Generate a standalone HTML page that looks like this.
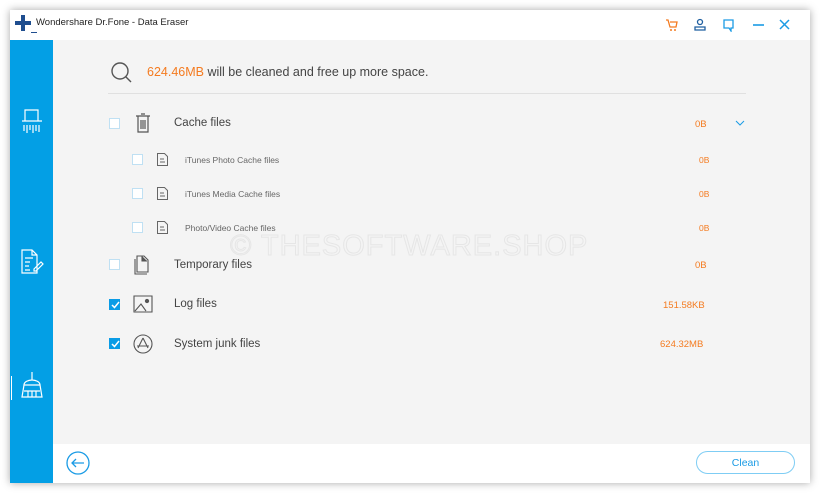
<!DOCTYPE html>
<html><head><meta charset="utf-8"><style>
*{margin:0;padding:0;box-sizing:border-box}
body{width:820px;height:493px;background:#fff;font-family:"Liberation Sans",sans-serif;position:relative;overflow:hidden}
.win{position:absolute;left:10px;top:10px;width:800px;height:473px;background:#f4f4f4;box-shadow:0 0 8px rgba(0,0,0,.35)}
.title{position:absolute;left:0;top:0;width:800px;height:30px;background:#fff}
.side{position:absolute;left:0;top:30px;width:43px;height:443px;background:#039fe5}
.bottom{position:absolute;left:43px;top:434px;width:757px;height:39px;background:#fff}
.t{position:absolute;white-space:nowrap}
.cb{position:absolute;width:11px;height:11px;border:1px solid #bfe0f3;background:#fff}
.cb.on{background:#0a9ce6;border-color:#0a9ce6}
.g{color:#444;font-size:11.5px}
.s{color:#666;font-size:8.5px}
.o{color:#f47b20;font-size:9.5px}
</style></head><body>
<div class="win">
 <div class="title">
  <svg style="position:absolute;left:5px;top:5px" width="16" height="16"><path d="M6 0h4v6h6v4h-6v6h-4v-6h-6v-4h6z" fill="#1f4e8f"/></svg>
  <div style="position:absolute;left:21px;top:22px;width:6px;height:1px;background:#1f4e8f"></div>
  <div class="t" style="left:26px;top:7px;font-size:9.5px;color:#222">Wondershare Dr.Fone - Data Eraser</div>
  <svg style="position:absolute;left:655px;top:8px" width="130" height="14" fill="none" stroke-width="1.3">
   <path d="M1 2h2l2 7h6l1-5H5" stroke="#f47b20"/><circle cx="6" cy="12" r="1" fill="#f47b20" stroke="none"/><circle cx="10" cy="12" r="1" fill="#f47b20" stroke="none"/>
   <circle cx="35" cy="4" r="2.5" stroke="#1f5fa0"/><path d="M30 9h10v3H30z" stroke="#1f5fa0"/>
   <path d="M59 2h9v8h-2v3l-2-3h-5z" stroke="#1a9be5"/>
   <path d="M88 7h11" stroke="#1a9be5" stroke-width="1.6"/>
   <path d="M115 2l9 9M124 2l-9 9" stroke="#1a9be5" stroke-width="1.5"/>
  </svg>
 </div>
 <div class="side">
  <svg style="position:absolute;left:11px;top:69px" width="22" height="26" fill="none" stroke="#fff" stroke-width="1.2"><path d="M4 1h13v11H4zM1 12h20M3 16v6M6 16v8M9 16v5M12 16v8M15 16v6M18 16v7"/></svg>
  <svg style="position:absolute;left:10px;top:209px" width="24" height="26" fill="none" stroke="#fff" stroke-width="1.2"><path d="M2 1h10l5 5v18H2zM12 1v5h5M5 9h8M5 13h5M5 17h4M5 21h5M14 20l7-7 2 2-7 7h-2z"/></svg>
  <div style="position:absolute;left:1px;top:336px;width:1px;height:24px;background:#fff"></div>
  <svg style="position:absolute;left:10px;top:331px" width="24" height="28" fill="none" stroke="#fff" stroke-width="1.2"><path d="M12 1v8M4 14c0-3 4-5 8-5s8 2 8 5zM4 14l-2 12h20l-2-12M4 20h16M8 20v6M12 20v6M16 20v6"/></svg>
 </div>
 <svg style="position:absolute;left:100px;top:51px" width="24" height="24" fill="none" stroke="#555" stroke-width="1.4"><circle cx="10" cy="10" r="8"/><path d="M16 16l5 5"/></svg>
 <div class="t" style="left:137px;top:55px;font-size:12.5px;color:#444"><span style="color:#f47b20">624.46MB</span> will be cleaned and free up more space.</div>
 <div style="position:absolute;left:98px;top:83px;width:638px;height:1px;background:#e0e0e0"></div>

 <div class="cb" style="left:99px;top:108px"></div>
 <svg style="position:absolute;left:125px;top:103px" width="16" height="20" fill="none" stroke="#555" stroke-width="1.2"><path d="M1 3h14M6 1h4M3 3v16h10V3M6 7v9M8 7v9M10 7v9"/></svg>
 <div class="t g" style="left:164px;top:107px">Cache files</div>
 <div class="t o" style="left:685px;top:109px">0B</div>
 <svg style="position:absolute;left:725px;top:110px" width="10" height="6" fill="none" stroke="#1a9be5"><path d="M1 1l4 4 4-4"/></svg>

 <div class="cb" style="left:122px;top:144px"></div>
 <svg style="position:absolute;left:147px;top:143px" width="11" height="13" fill="none" stroke="#666"><path d="M.5.5h7l3 3v9H.5zM3 6h4M3 9h5"/></svg>
 <div class="t s" style="left:175px;top:145px">iTunes Photo Cache files</div>
 <div class="t o" style="left:689px;top:145px;font-size:8.5px">0B</div>

 <div class="cb" style="left:122px;top:178px"></div>
 <svg style="position:absolute;left:147px;top:177px" width="11" height="13" fill="none" stroke="#666"><path d="M.5.5h7l3 3v9H.5zM3 6h4M3 9h5"/></svg>
 <div class="t s" style="left:175px;top:179px">iTunes Media Cache files</div>
 <div class="t o" style="left:689px;top:179px;font-size:8.5px">0B</div>

 <div class="cb" style="left:122px;top:212px"></div>
 <svg style="position:absolute;left:147px;top:211px" width="11" height="13" fill="none" stroke="#666"><path d="M.5.5h7l3 3v9H.5zM3 6h4M3 9h5"/></svg>
 <div class="t s" style="left:175px;top:213px">Photo/Video Cache files</div>
 <div class="t o" style="left:689px;top:213px;font-size:8.5px">0B</div>

 <div class="t" style="left:220px;top:220px;font-size:29px;color:transparent;-webkit-text-stroke:1px #e6e6e6;letter-spacing:1px">© THESOFTWARE.SHOP</div>

 <div class="cb" style="left:99px;top:249px"></div>
 <svg style="position:absolute;left:124px;top:245px" width="18" height="20" fill="none" stroke="#555" stroke-width="1.1"><path d="M3 1h7l4 4v12H3zM1 4v15h12"/><path d="M8 1v5h5" fill="#555"/></svg>
 <div class="t g" style="left:164px;top:249px">Temporary files</div>
 <div class="t o" style="left:685px;top:250px">0B</div>

 <div class="cb on" style="left:99px;top:289px"></div>
 <svg style="position:absolute;left:101px;top:291px" width="9" height="8" fill="none" stroke="#fff" stroke-width="1.5"><path d="M1 4l2.5 2.5L8 1"/></svg>
 <svg style="position:absolute;left:123px;top:285px" width="20" height="18" fill="none" stroke="#555" stroke-width="1.1"><path d="M1 1h18v16H1zM2 16l6-7 5 7"/><circle cx="14" cy="6" r="1.6" fill="#555"/></svg>
 <div class="t g" style="left:164px;top:288px">Log files</div>
 <div class="t o" style="left:653px;top:290px">151.58KB</div>

 <div class="cb on" style="left:99px;top:328px"></div>
 <svg style="position:absolute;left:101px;top:330px" width="9" height="8" fill="none" stroke="#fff" stroke-width="1.5"><path d="M1 4l2.5 2.5L8 1"/></svg>
 <svg style="position:absolute;left:123px;top:324px" width="20" height="20" fill="none" stroke="#555" stroke-width="1.1"><circle cx="10" cy="10" r="9"/><path d="M10 4l-5 10M10 4l5 10M4 12h12"/></svg>
 <div class="t g" style="left:164px;top:328px">System junk files</div>
 <div class="t o" style="left:650px;top:329px">624.32MB</div>

 <div class="bottom">
  <svg style="position:absolute;left:13px;top:7px" width="24" height="24" fill="none" stroke="#1a9be5" stroke-width="1.3"><circle cx="12" cy="12" r="11"/><path d="M18 12H6M10 8l-4 4 4 4"/></svg>
  <div style="position:absolute;left:643px;top:7px;width:99px;height:23px;border:1.5px solid #7fcdf4;border-radius:12px;color:#1a9be5;font-size:10.5px;text-align:center;line-height:21px;padding-top:1px">Clean</div>
 </div>
</div>
</body></html>
